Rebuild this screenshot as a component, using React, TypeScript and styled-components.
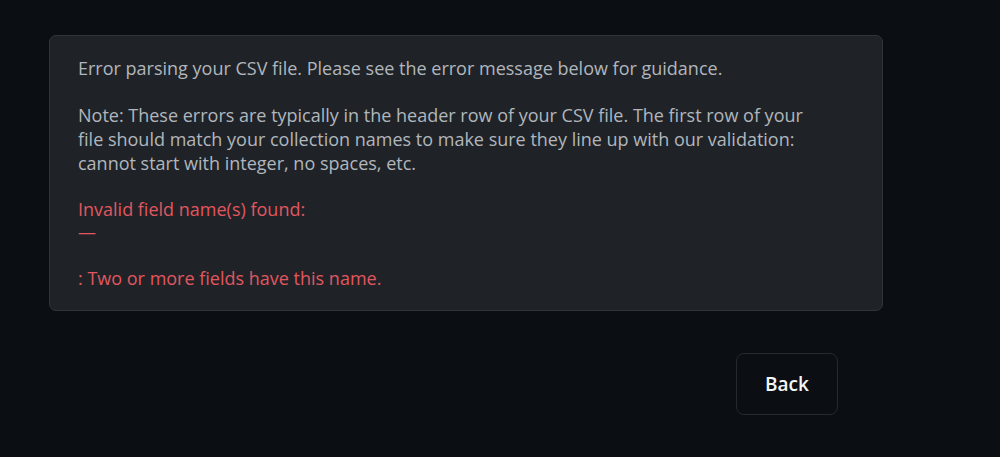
import React from "react";
import styled, { createGlobalStyle } from "styled-components";

const Global = createGlobalStyle`
  html, body { margin: 0; padding: 0; background: #0b0f14; }
  body { font-family: "Open Sans", "Noto Sans", sans-serif; }
`;

const Page = styled.div`
  width: 1000px;
  height: 457px;
  box-sizing: border-box;
  padding: 35px 0 0 49px;
  display: flex;
  flex-direction: column;
  background: #0b0f14;
`;

const Card = styled.div`
  width: 834px;
  height: 276px;
  box-sizing: border-box;
  padding: 20px 28px 20px 28px;
  background: #1f2327;
  border: 1px solid #30353b;
  border-radius: 7px;
  display: flex;
  flex-direction: column;
  gap: 23px;
`;

const Para = styled.p<{ $error?: boolean }>`
  margin: 0;
  font-size: 18px;
  line-height: ${(p) => (p.$error ? "23px" : "24px")};
  color: ${(p) => (p.$error ? "#e2565f" : "#b1b6bd")};
  white-space: pre-line;
`;

const Actions = styled.div`
  display: flex;
  justify-content: flex-end;
  width: 789px;
  margin-top: 42px;
`;

const BackButton = styled.button`
  width: 102px;
  height: 62px;
  background: #0b0f14;
  border: 1px solid #262a30;
  border-radius: 8px;
  color: #f4f5f6;
  font-family: "Open Sans", "Noto Sans", sans-serif;
  font-size: 19px;
  font-weight: 600;
  cursor: pointer;
`;

export default function App() {
  return (
    <>
      <Global />
      <Page>
        <Card>
          <Para>Error parsing your CSV file. Please see the error message below for guidance.</Para>
          <Para>
            {"Note: These errors are typically in the header row of your CSV file. The first row of your\nfile should match your collection names to make sure they line up with our validation:\ncannot start with integer, no spaces, etc."}
          </Para>
          <Para $error>{"Invalid field name(s) found:\n—\n\n: Two or more fields have this name."}</Para>
        </Card>
        <Actions>
          <BackButton>Back</BackButton>
        </Actions>
      </Page>
    </>
  );
}
